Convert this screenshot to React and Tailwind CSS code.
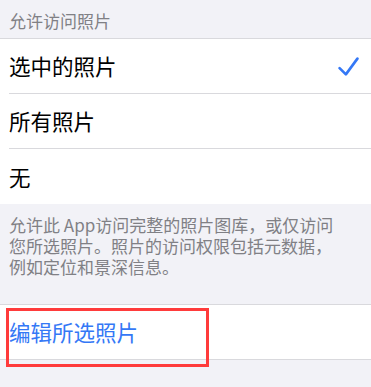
const font = { fontFamily: '"Noto Sans CJK SC", "Noto Sans", sans-serif' };

const Check = () => (
  <svg width="21" height="21" viewBox="0 0 20 20" fill="none">
    <path
      d="M1.5 11.5 L7.5 17.5 L18.5 2.5"
      stroke="#3478f6"
      strokeWidth="2.5"
      strokeLinecap="round"
      strokeLinejoin="round"
    />
  </svg>
);

const Option = ({ label, checked, last }) => (
  <div className="flex h-[55px] items-center pl-[9px]">
    <div
      className={`flex h-full flex-1 items-center pr-[12px] ${
        last ? "" : "border-b border-[#d9d9dd]"
      }`}
    >
      <span className="flex-1 text-[21.5px] leading-none text-black">{label}</span>
      {checked && <Check />}
    </div>
  </div>
);

export default function App() {
  return (
    <div className="h-[387px] w-[371px] overflow-hidden bg-[#f2f2f7]" style={font}>
      <div className="flex h-[39px] items-center border-b border-[#d9d9dd] px-[9px] pt-[2px]">
        <span className="text-[17px] leading-none text-[#808085]">允许访问照片</span>
      </div>

      <div className="bg-white">
        <Option label="选中的照片" checked />
        <Option label="所有照片" />
        <Option label="无" last />
      </div>

      <div className="px-[9px] pt-[10px] pb-[27px]">
        <p className="whitespace-nowrap text-[17px] leading-[21px] text-[#808085]">
          允许此 App访问完整的照片图库，或仅访问
          <br />
          您所选照片。照片的访问权限包括元数据，
          <br />
          例如定位和景深信息。
        </p>
      </div>

      <div className="relative border-y border-[#d9d9dd] bg-white">
        <div className="flex h-[54px] items-center px-[9px]">
          <span className="text-[21.5px] leading-none text-[#3478f6]">编辑所选照片</span>
        </div>
        <div className="absolute left-[6px] top-[3px] h-[59px] w-[203px] border-[3px] border-[#ff3b3b]" />
      </div>
    </div>
  );
}
